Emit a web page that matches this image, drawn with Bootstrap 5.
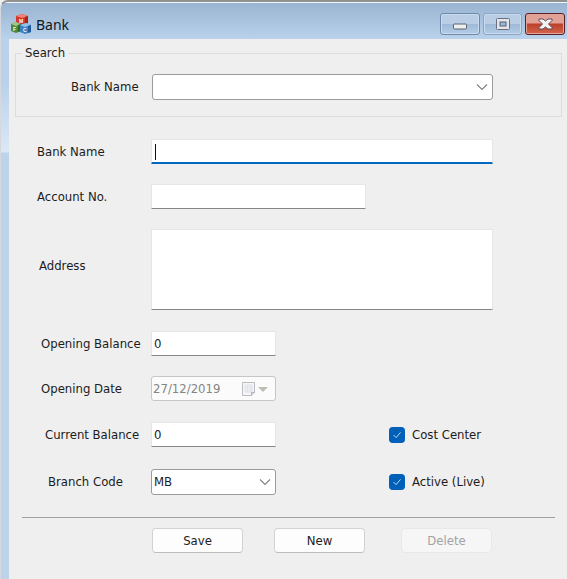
<!DOCTYPE html>
<html lang="en">
<head>
<meta charset="utf-8">
<meta name="viewport" content="width=device-width, initial-scale=1">
<title>Bank</title>
<link href="https://cdn.jsdelivr.net/npm/bootstrap@5.3.0/dist/css/bootstrap.min.css" rel="stylesheet">
<style>
  body { font-family: "DejaVu Sans Condensed", "Noto Sans", sans-serif; font-size: 13px; line-height: 18px; color: #1c1c1c; background: #efefef; }
  .app-window { border: 0 solid #9a9e9b; border-top: 2px solid #8f928e; border-left: 1px solid #d5d9dd; border-top-left-radius: 8px; background: #bcd3ea; padding-left: 8px;
    background-image: linear-gradient(#f3f7fb, #f3f7fb), linear-gradient(#98b3d1, #b9d1ea 36px, #b9d1ea 80px, #dce8f4 150px, #bcd3ea 151px);
    background-size: 100% 1px, 100% 100%; background-repeat: no-repeat; }
  .title-bar { height: 37px; padding: 9px 2px 2px 2px; }
  .title-bar h1 { font-family: "Noto Sans", "Open Sans", sans-serif; font-size: 14px; line-height: 28px; font-weight: 400; color: #101820; }
  .app-icon { margin-top: 3px; }
  .app-icon text { font: bold 5px "Liberation Sans", sans-serif; fill: #fff; }
  .caption-set { gap: 3px; padding-top: 2px; }
  .caption-btn { width: 40px; height: 22px; border: 1px solid #6f8aa8; border-radius: 3px; padding: 0; box-shadow: inset 0 0 0 1px #c9dcef; background: linear-gradient(#b9cee5 48%, #9db9d8 50%, #b4cce5); }
  .caption-btn.dim { width: 39px; border-color: #8ba5c3; }
  .caption-btn.shut { border-color: #54202a; box-shadow: inset 0 0 0 1px #e5a39a; background: linear-gradient(#e2a196 45%, #bb3f2a 50%, #d2664b); }
  .client { background: #efefef; padding: 6px 5px 24px 6px; }
  fieldset { border: 1px solid #dcdcdc; padding: 13px 68px 16px 0; }
  legend { font-size: 13px; line-height: 16px; padding: 0 3px; margin: 0 0 0 6px; }
  .form-row { display: grid; grid-template-columns: 136px minmax(0, 1fr); align-items: center; }
  .fields { padding-right: 69px; }
  .ind-a { padding-left: 22px; } .ind-b { padding-left: 24px; } .ind-c { padding-left: 26px; }
  .ind-d { padding-left: 30px; } .ind-e { padding-left: 33px; } .ind-f { padding-left: 55px; }
  .form-control, .form-select { font-size: 13px; line-height: 18px; color: #1c1c1c; border-radius: 1px; background-color: #fff; }
  .edit { height: 25px; padding: 0 2px; border: 1px solid #e6e6e6; border-bottom: 1px solid #868686; }
  .edit.active { border-bottom: 2px solid #0067c0; background: linear-gradient(#111, #111) 3px 4px / 1px 16px no-repeat #fff; }
  .memo { height: 81px; resize: none; }
  .half { width: 63%; }
  .short { width: 125px; }
  .combo { height: 26px; padding: 0 24px 0 2px; border: 1px solid #9b9b9b; border-radius: 3px;
    background-image: url("data:image/svg+xml,%3Csvg xmlns='http://www.w3.org/2000/svg' viewBox='0 0 12 8'%3E%3Cpath d='M1 1.5l5 5 5-5' fill='none' stroke='%23808080' stroke-width='1.1'/%3E%3C/svg%3E"); background-size: 12px 8px; background-position: right 4px center; }
  .date-box { height: 25px; border: 1px solid #c6c6c6; border-radius: 3px; background: #fbfbfb; }
  .date-box .form-control:disabled { border: 0; background: transparent; color: #858585; padding: 0 0 0 1px; min-width: 0; }
  .date-box button { border: 0; background: none; padding: 0 6px 0 0; line-height: 0; }
  .tick { width: 157px; gap: 7px; flex: none; margin-right: -53px; }
  .tick input { width: 16px; height: 16px; margin: 0; border-radius: 3px; }
  .tick input:checked { border-color: #005fb8; background-color: #005fb8;
    background-image: url("data:image/svg+xml,%3Csvg xmlns='http://www.w3.org/2000/svg' viewBox='0 0 16 16'%3E%3Cpath d='M4 8l3 3 5-6' fill='none' stroke='%23c5dcf2' stroke-width='1.1'/%3E%3C/svg%3E"); }
  .rule { margin: 22px 7px 10px 7px; border-top: 1px solid #a0a0a0; opacity: 1; }
  .actions { padding-left: 137px; padding-right: 70px; }
  .pair { gap: 31px; }
  .push { width: 91px; height: 25px; padding: 0; font-size: 13px; line-height: 20px; color: #1c1c1c; background: #fdfdfd; border: 1px solid #d2d2d2; border-bottom-color: #bdbdbd; border-radius: 4px; }
  .push:disabled { color: #a3a3a3; background: #f6f6f6; border-color: #e8e8e8; opacity: 1; }
  .gap-s { margin-top: 22px; } .gap-m { margin-top: 20px; } .gap-n { margin-top: 21px; }
</style>
<script src="https://cdn.jsdelivr.net/npm/bootstrap@5.3.0/dist/js/bootstrap.bundle.min.js"></script>
</head>
<body>
<main class="app-window min-vh-100 d-flex flex-column">
  <header class="title-bar d-flex align-items-start">
    <svg class="app-icon me-1" width="21" height="20" viewBox="0 0 21 20" aria-hidden="true">
      <path d="M5 2l6-2 6 2v7l-6 2-6-2z" fill="#d2382c"/><path d="M5 2l6-2 6 2-6 2z" fill="#ef8374"/><path d="M14 3l3-1v7l-3 1z" fill="#a82320"/>
      <path d="M0 10l5-2 5 2v7l-5 2-5-2z" fill="#4b8a38"/><path d="M0 10l5-2 5 2-5 2z" fill="#a1c886"/><path d="M7 11l3-1v7l-3 1z" fill="#2d6825"/>
      <path d="M9 11l6-2 5 2v7l-6 2-5-2z" fill="#3a82c4"/><path d="M9 11l6-2 5 2-6 2z" fill="#91c4eb"/><path d="M17 12l3-1v7l-3 1z" fill="#215a9d"/>
      <text x="8" y="9">M</text><text x="2" y="17">F</text><text x="12" y="18">C</text>
    </svg>
    <h1 class="m-0 flex-grow-1">Bank</h1>
    <div class="caption-set d-flex">
      <button class="caption-btn" aria-label="Minimize"><svg class="d-block mx-auto mt-1" width="14" height="7" viewBox="0 0 14 7"><rect x=".5" y="1" width="13" height="5" rx="1" fill="#efefef" stroke="#5b6270"/></svg></button>
      <button class="caption-btn dim" aria-label="Maximize"><svg class="d-block mx-auto" width="14" height="12" viewBox="0 0 14 12"><rect x=".5" y=".5" width="13" height="11" rx="1" fill="#e3e5e9" stroke="#686f80"/><rect x="4" y="4" width="6" height="4" fill="#9ab7d7" stroke="#596274"/></svg></button>
      <button class="caption-btn shut" aria-label="Close"><svg class="d-block mx-auto" width="15" height="12" viewBox="0 0 15 12"><path d="M1 1h4l2.500 2L10 1h4v1.500L10.500 6 14 9.500V11h-4L7.500 9 5 11H1V9.500L4.500 6 1 2.500z" fill="#f2f2f2" stroke="#5d4a58"/></svg></button>
    </div>
  </header>
  <form class="client flex-grow-1">
    <fieldset>
      <legend class="float-none w-auto">Search</legend>
      <div class="form-row">
        <label class="ind-f" for="find">Bank Name</label>
        <select id="find" class="form-select combo"><option></option></select>
      </div>
    </fieldset>
    <div class="fields">
      <div class="form-row gap-s"><label class="ind-a" for="bank">Bank Name</label><input id="bank" class="form-control edit active"></div>
      <div class="form-row gap-m"><label class="ind-a" for="acct">Account No.</label><input id="acct" class="form-control edit half"></div>
      <div class="form-row gap-m"><label class="ind-b pb-2" for="addr">Address</label><textarea id="addr" class="form-control edit memo"></textarea></div>
      <div class="form-row gap-n"><label class="ind-c" for="open">Opening Balance</label><input id="open" class="form-control edit short" value="0"></div>
      <div class="form-row gap-m"><label class="ind-c" for="date">Opening Date</label>
        <div class="date-box short d-flex align-items-center">
          <input id="date" class="form-control" value="27/12/2019" disabled>
          <button type="button" disabled aria-label="Choose date"><svg width="28" height="16" viewBox="0 0 28 16"><path d="M1.500 1.500h12v10l-3 3h-9z" fill="#f4f5f7" stroke="#bcbcc0"/><path d="M4 4h7v7H4zM4 6.500h7M4 9h7M6.500 4v7M9 4v7" fill="none" stroke="#dfe2e9"/><path d="M13.500 11.500h-3v3" fill="#ddd" stroke="#b5b5b5"/><path d="M17 6h10l-5 5z" fill="#bcbfb2"/></svg></button>
        </div>
      </div>
      <div class="form-row gap-n"><label class="ind-d" for="cur">Current Balance</label>
        <div class="d-flex justify-content-between align-items-center">
          <input id="cur" class="form-control edit short" value="0">
          <div class="tick d-flex align-items-center"><input class="form-check-input" type="checkbox" id="cost" checked><label for="cost">Cost Center</label></div>
        </div>
      </div>
      <div class="form-row gap-s"><label class="ind-e" for="branch">Branch Code</label>
        <div class="d-flex justify-content-between align-items-center">
          <select id="branch" class="form-select combo short"><option>MB</option></select>
          <div class="tick d-flex align-items-center"><input class="form-check-input" type="checkbox" id="live" checked><label for="live">Active (Live)</label></div>
        </div>
      </div>
    </div>
    <hr class="rule">
    <div class="actions d-flex justify-content-between">
      <div class="pair d-flex">
        <button type="button" class="btn push">Save</button>
        <button type="button" class="btn push">New</button>
      </div>
      <button type="button" class="btn push" disabled>Delete</button>
    </div>
  </form>
</main>
</body>
</html>
